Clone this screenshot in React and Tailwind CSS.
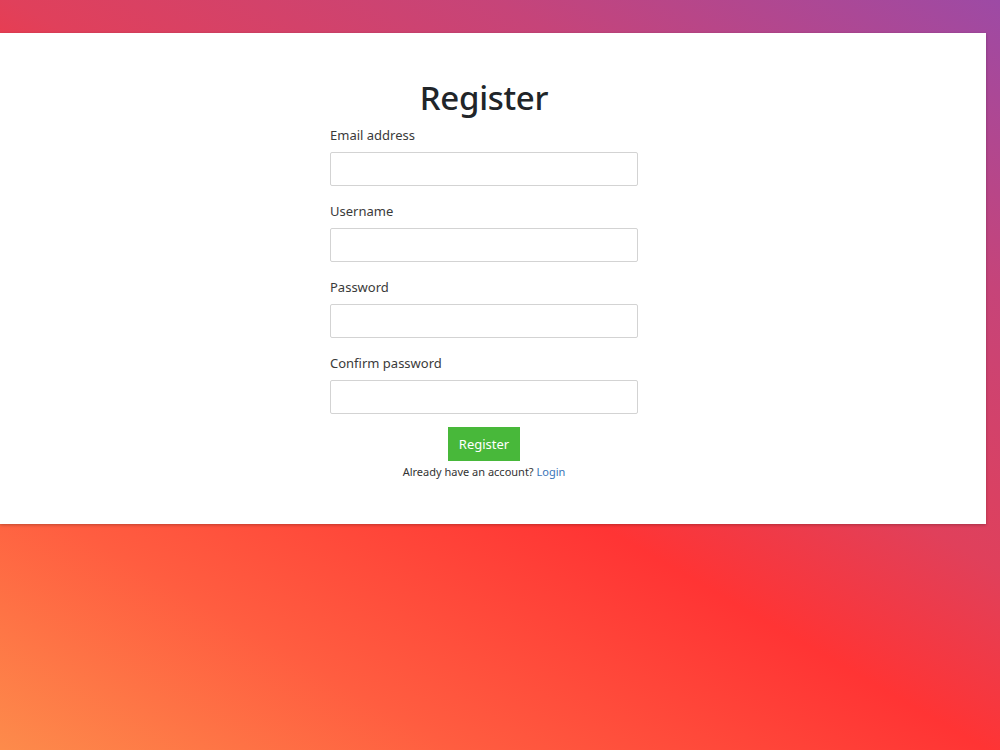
import React from 'react';

const fields = [
  { id: 'email', label: 'Email address', type: 'email' },
  { id: 'username', label: 'Username', type: 'text' },
  { id: 'password', label: 'Password', type: 'password' },
  { id: 'confirm', label: 'Confirm password', type: 'password' },
];

const App = () => {
  return (
    <div
      className="min-h-[750px] w-full pt-[33px] bg-[linear-gradient(30deg,#fd8b4b_0%,#ff5d40_20%,#ff3434_43%,#e0405b_57%,#c64479_78%,#9d4aa5_100%)]"
      style={{ fontFamily: '"Noto Sans", "Open Sans", sans-serif' }}
    >
      <div className="w-[986px] h-[491px] bg-white shadow-[0_1px_3px_rgba(0,0,0,0.25)] pt-[45px]">
        <form className="w-[308px] ml-[330px] flex flex-col" onSubmit={(e) => e.preventDefault()}>
          <h1 className="text-center text-[33px] leading-[40px] font-medium text-[#212529] tracking-[-0.3px]">
            Register
          </h1>

          {fields.map((f, i) => (
            <div key={f.id} className={i === 0 ? 'mt-[7px]' : 'mt-[15px]'}>
              <label htmlFor={f.id} className="block text-[13px] leading-[20px] text-[#3a3a3a]">
                {f.label}
              </label>
              <input
                id={f.id}
                type={f.type}
                className="mt-[7px] block w-full h-[34px] border border-[#d3d3d3] rounded-[2px] px-3 text-[14px] outline-none focus:border-[#80bdff]"
              />
            </div>
          ))}

          <div className="flex justify-center mt-[13px]">
            <button
              type="submit"
              className="h-[34px] px-[11px] bg-[#48b83a] text-white text-[13px] leading-[20px]"
            >
              Register
            </button>
          </div>

          <p className="mt-[3px] text-center text-[11px] leading-[16px] text-[#333]">
            Already have an account? <a href="#" className="text-[#3a74b8]">Login</a>
          </p>
        </form>
      </div>
    </div>
  );
};

export default App;
